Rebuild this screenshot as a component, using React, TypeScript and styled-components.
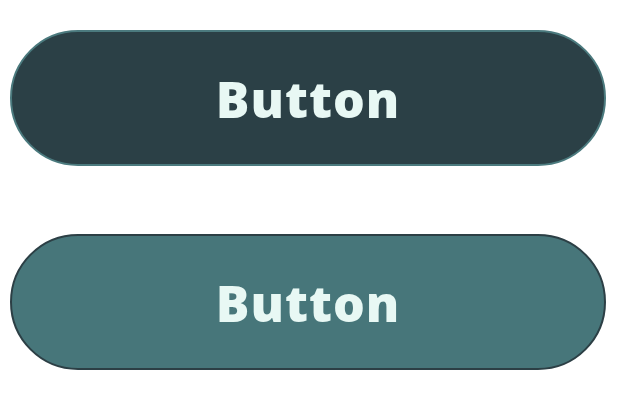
import React from "react";
import styled, { createGlobalStyle } from "styled-components";

const Global = createGlobalStyle`
  html, body { margin: 0; padding: 0; background: #ffffff; }
  body { font-family: "Open Sans", "DejaVu Sans", sans-serif; }
`;

const Page = styled.div`
  display: flex;
  flex-direction: column;
  gap: 68px;
  padding: 30px 19px 0 10px;
`;

const PillButton = styled.button<{ $variant: "dark" | "light" }>`
  box-sizing: border-box;
  width: 596px;
  height: 136px;
  border-radius: 68px;
  border: 2px solid ${(p) => (p.$variant === "dark" ? "#4b7a7e" : "#2c3f45")};
  background: ${(p) => (p.$variant === "dark" ? "#2b4046" : "#47767a")};
  color: #e8f8f4;
  font-family: "Open Sans", "DejaVu Sans", sans-serif;
  font-weight: 800;
  font-size: 50px;
  letter-spacing: 1px;
  display: flex;
  align-items: center;
  justify-content: center;
  padding: 2px 0 0 0;
  cursor: pointer;
`;

export default function App() {
  return (
    <>
      <Global />
      <Page>
        <PillButton $variant="dark">Button</PillButton>
        <PillButton $variant="light">Button</PillButton>
      </Page>
    </>
  );
}
